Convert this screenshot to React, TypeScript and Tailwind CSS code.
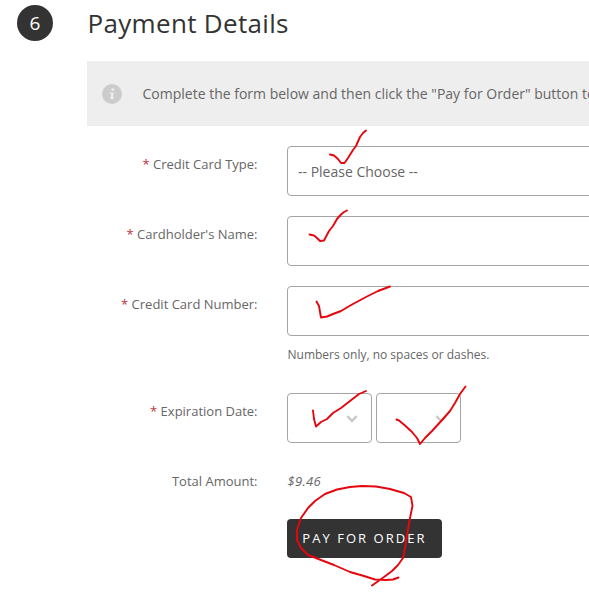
import type { ReactNode } from "react";

const MARKS = [
  "M330 154.5 L334 155.5 L338 159 L341 163 L344.5 163 L348 158 L353 150 L356 146 L360 137 L363 133 L366 130.5",
  "M309.5 234.5 L314 235.5 L317 238 L320 241 L324 240.5 L329 231 L333 226 L337 219 L341 214.5 L344 212 L347 210.5",
  "M316.5 301.5 L319 306 L320 312 L321 317.5 L327 316.5 L333 314 L341 311 L352 304.5 L366 297 L378 291 L390 286.5",
  "M313 410.5 L314 419 L316 426.5 L321 422 L327 419 L333 413 L341 408 L350 401 L359 394 L366 391",
  "M396.5 419.5 L399 420.5 L405 425.5 L412 432 L417 438 L420 444 L425 438 L432 431 L443 419 L450 411 L455 403 L460 394 L465.5 386.5",
  "M372 585.5 L377 582 L384 577 L392 571 L398 565 L403 558 L405 548 L408 529 L410 518 L412.5 506 L411 497 L404 493 L390 489 L376 486.5 L362 486 L350 487 L337 489.5 L325 494 L315 501 L308 508 L301 518 L297 530 L297 540 L301 548 L308 555 L321 560 L334 565 L350 572 L364 576 L375 579.5 L386 580 L393 579.5 L398.5 577.5",
];

function Row({
  label,
  required,
  className = "",
  children,
}: {
  label: string;
  required?: boolean;
  className?: string;
  children: ReactNode;
}) {
  return (
    <div className={`flex ${className}`}>
      <div className="w-[170.5px] shrink-0 pt-2 text-right text-[13px] leading-5 whitespace-nowrap">
        {required && <span className="text-[#c0303a]">* </span>}
        {label}
      </div>
      <div className="ml-[29.5px] min-w-0 flex-1">{children}</div>
    </div>
  );
}

function SmallSelect() {
  return (
    <button
      type="button"
      className="flex h-[50px] w-[85px] items-center justify-end rounded border border-[#a5a5a5] bg-white pt-px pr-[13px]"
    >
      <svg width="12" height="8" viewBox="0 0 12 8" fill="none" stroke="#c8c8c8" strokeWidth="2.4">
        <path d="M1.4 1.2 L6 6 L10.6 1.2" />
      </svg>
    </button>
  );
}

export default function App() {
  return (
    <div className="relative h-[603px] w-[589px] overflow-hidden bg-white font-['Open_Sans',sans-serif] text-[#666]">
      <div className="flex pt-[5px] pl-[17px]">
        <div className="flex size-9 items-center justify-center rounded-full bg-[#333] text-[19px] text-white">
          6
        </div>
        <h2 className="ml-[34.5px] text-[26px] leading-9 tracking-[0.32px] text-[#333]">Payment Details</h2>
      </div>

      <div className="pl-[87px]">
        <div className="mt-5 flex h-[65px] items-center bg-[#eee] pl-[15px] whitespace-nowrap">
          <svg width="20" height="20" viewBox="0 0 20 20" className="shrink-0">
            <circle cx="10" cy="10" r="10" fill="#ccc" />
            <circle cx="10.8" cy="5.6" r="1.4" fill="#eee" />
            <path d="M8 8.4 H11.8 L10.8 13.6 H12 L11.6 15 H8.2 L9.2 9.8 H7.8 Z" fill="#eee" />
          </svg>
          <p className="ml-5 pl-[0.5px] text-sm">
            Complete the form below and then click the "Pay for Order" button to place your order.
          </p>
        </div>

        <Row label="Credit Card Type:" required className="mt-5">
          <button
            type="button"
            className="flex h-[50px] w-[400px] items-center rounded border border-[#a5a5a5] bg-white pt-0.5 pl-[10px] text-sm"
          >
            -- Please Choose --
          </button>
        </Row>
        <Row label="Cardholder's Name:" required className="mt-5">
          <input className="block h-[50px] w-[400px] rounded border border-[#a5a5a5] bg-white px-3 text-sm outline-none" />
        </Row>
        <Row label="Credit Card Number:" required className="mt-5">
          <input className="block h-[50px] w-[400px] rounded border border-[#a5a5a5] bg-white px-3 text-sm outline-none" />
          <p className="mt-[10px] pl-[0.5px] text-xs leading-[18px]">Numbers only, no spaces or dashes.</p>
        </Row>
        <Row label="Expiration Date:" required className="mt-[29px]">
          <div className="flex gap-1">
            <SmallSelect />
            <SmallSelect />
          </div>
        </Row>
        <Row label="Total Amount:" className="mt-5">
          <p className="pt-2 pl-[0.5px] text-[13px] leading-5 tracking-[0.3px] italic">$9.46</p>
        </Row>

        <button
          type="button"
          className="mt-7 ml-[200px] flex h-[39px] w-[155px] items-center justify-center rounded bg-[#333] text-[13px] tracking-[2.05px] text-white"
        >
          PAY FOR ORDER
        </button>
      </div>

      {/* Hand-drawn pen marks over the form */}
      <svg
        width="589"
        height="603"
        viewBox="0 0 589 603"
        className="pointer-events-none absolute inset-0"
        fill="none"
        stroke="#e6060d"
        strokeWidth="1.9"
        strokeLinecap="round"
        strokeLinejoin="round"
      >
        {MARKS.map((d) => (
          <path key={d} d={d} />
        ))}
      </svg>
    </div>
  );
}
